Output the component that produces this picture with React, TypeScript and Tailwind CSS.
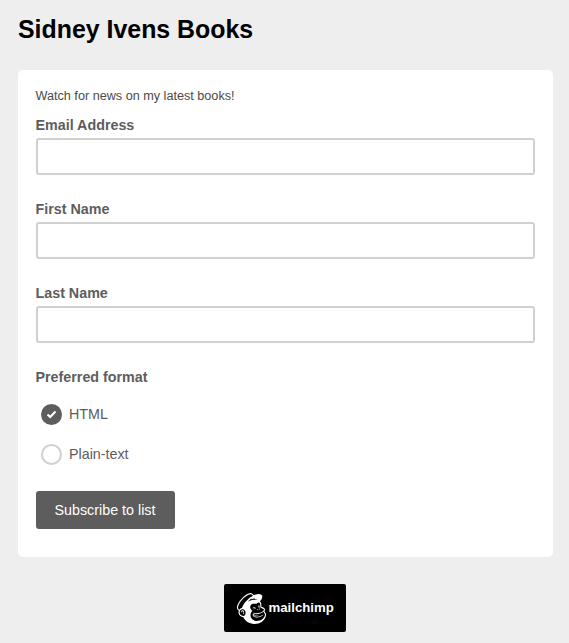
import { SiMailchimp } from "react-icons/si";

function Field({ label }: { label: string }) {
  return (
    <div className="mb-[25px]">
      <label className="block text-[14.3px] leading-[18px] font-bold text-[#5d5d5d] mb-[4px]">{label}</label>
      <input type="text" className="block w-full h-[37px] bg-white border-2 border-[#d0d0d0] rounded-[3px]" />
    </div>
  );
}

function Radio({ label, checked }: { label: string; checked?: boolean }) {
  return (
    <div className="flex items-center h-[40px] pl-[5.5px] gap-[7px]">
      {checked ? (
        <span className="flex items-center justify-center w-[21px] h-[21px] rounded-full bg-[#5d5d5d]">
          <svg width="11" height="9" viewBox="0 0 11 9" fill="none">
            <path d="M1.5 4.5L4.2 7L9.5 1.5" stroke="white" strokeWidth="2" />
          </svg>
        </span>
      ) : (
        <span className="w-[21px] h-[21px] rounded-full border-2 border-[#d0d0d0] bg-white" />
      )}
      <span className="pt-[2px] text-[14.3px] text-[#5d5d5d]">{label}</span>
    </div>
  );
}

export default function App() {
  return (
    <div className="min-h-screen bg-[#eeeeee] px-[18px] pt-[15px] font-['Liberation_Sans',Arial,sans-serif]">
      <h1 className="text-[24.9px] leading-[28px] font-bold text-black mb-[27px]">Sidney Ivens Books</h1>
      <div className="bg-white rounded-[5px] w-[535px] h-[487px] pl-[17.5px] pr-[18px] pt-[18px]">
        <p className="text-[12.65px] leading-[16px] text-[#4a4a4a] mb-[12px]">Watch for news on my latest books!</p>
        <Field label="Email Address" />
        <Field label="First Name" />
        <Field label="Last Name" />
        <div className="text-[14.3px] leading-[18px] font-bold text-[#5d5d5d] mb-[8px]">Preferred format</div>
        <Radio label="HTML" checked />
        <Radio label="Plain-text" />
        <button className="mt-[17px] pt-[2px] w-[139px] h-[38px] bg-[#5d5d5d] text-white text-[14.3px] rounded-[3px]">Subscribe to list</button>
      </div>
      <div className="flex justify-center mt-[27px]">
        <div className="flex items-center w-[122px] h-[48px] bg-black rounded-[2px] pl-[12px] gap-[2px] text-white">
          <SiMailchimp size={31} />
          <span className="text-[13.2px] font-bold">mailchimp</span>
        </div>
      </div>
    </div>
  );
}
